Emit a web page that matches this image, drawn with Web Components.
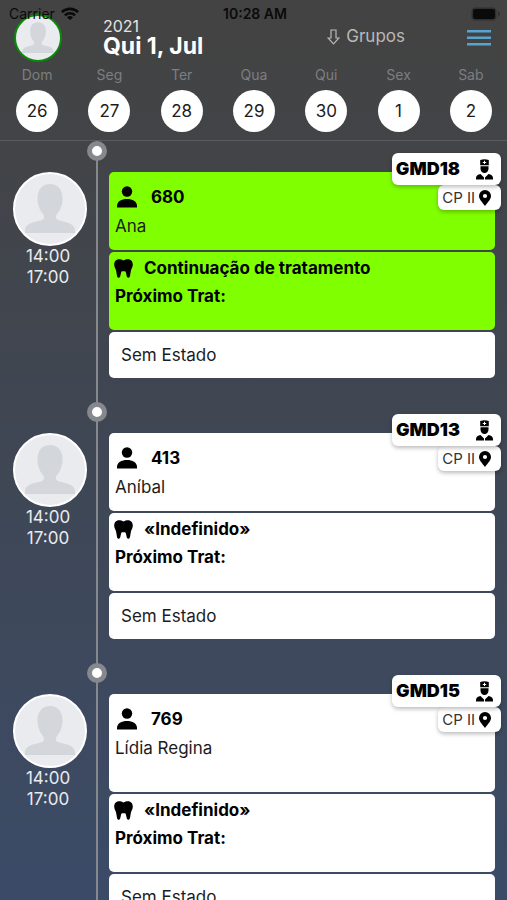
<!DOCTYPE html>
<html lang="pt">
<head>
<meta charset="utf-8">
<meta name="viewport" content="width=device-width, initial-scale=1">
<title>Agenda</title>
<style>
  html, body { margin: 0; height: 100%; }
  body { font-family: Inter, "Liberation Sans", sans-serif; font-size: 17px; line-height: 21px; color: #000; background: #434343; }
</style>
</head>
<body>
<agenda-app></agenda-app>
<script>
const ICONS = {
  person: ['0 0 20 22', '<circle cx="10" cy="5.500" r="5.200"/><path d="M0 21.500v-1.500C0 15.500 4.500 13 10 13s10 2.500 10 7v1.500z"/>'],
  tooth: ['0 0 19 19', '<path d="M9.500 1.500C11 .7 12.300.2 14 .2c3 0 4.800 2.400 4.800 5.300 0 2.500-1.300 4-1.800 5.800-.5 2-.5 3.700-1 5.700-.3 1.100-.8 1.800-1.700 1.800s-1.400-.7-1.600-1.700l-.8-3.600c-.2-.8-.6-1.200-1.100-1.200H8.200c-.5 0-.9.400-1.100 1.200l-.8 3.600c-.2 1-.7 1.700-1.600 1.700S3.300 18.100 3 17c-.5-2-.5-3.700-1-5.700C1.500 9.500.2 8 .2 5.500.2 2.600 2 .2 5 .2c1.700 0 3 .5 4.500 1.300z"/>'],
  nurse: ['0 0 17 21', '<path fill-rule="evenodd" d="M4.200.9Q8.500-.5 12.800.9V6.200H4.200ZM8 1.700v1.200H6.800v1H8v1.200h1V3.900h1.200v-1H9V1.700z"/><path d="M4.500 7.200h8v2.300a4 4.500 0 0 1-8 0z"/><path d="M4.500 15 8 18.500V20.600H0V19C0 16.800 2 15.300 4.500 15zM12.500 15 9 18.500v2.100h8V19c0-2.200-2-3.700-4.500-4z"/>'],
  pin: ['0 0 12 16', '<path fill-rule="evenodd" d="M6 0a6 6 0 0 1 6 6c0 3-3 6-6 10C3 12 0 9 0 6a6 6 0 0 1 6-6zm0 3.900a2.100 2.100 0 1 0 0 4.200 2.100 2.100 0 0 0 0-4.200z"/>'],
  wifi: ['0 0 18 13', '<path d="M0 4.200a13 13 0 0 1 18 0l-1.700 1.900a10.500 10.500 0 0 0-14.600 0zM3 7.400a8.700 8.700 0 0 1 12 0l-1.800 1.900a6 6 0 0 0-8.400 0zM6 10.500a4.300 4.300 0 0 1 6 0L9 13z"/>'],
  battery: ['0 0 30 14', '<rect x=".5" y=".5" width="25" height="13" rx="4" fill="#303030"/><rect x="2" y="2" width="22" height="10" rx="2.500"/><path d="M27 4.500q2 .8 2 2.500t-2 2.500z" fill="#303030"/>'],
  down: ['0 0 13 16', '<path d="M4 1h5v8h3l-5.500 5.800L1 9h3z" fill="none" stroke="currentColor" stroke-width="1.200"/>'],
  menu: ['0 0 24 16', '<path d="M0 0h24v2.500H0zM0 6.500h24V9H0zM0 13h24v2.500H0z"/>']
};

customElements.define('app-icon', class extends HTMLElement {
  connectedCallback() {
    const [box, shapes] = ICONS[this.getAttribute('name')];
    this.attachShadow({ mode: 'open' }).innerHTML = `
      <style>:host{display:block;flex:none} svg{display:block;width:100%;height:100%}</style>
      <svg viewBox="${box}" fill="currentColor" aria-hidden="true">${shapes}</svg>`;
  }
});

customElements.define('user-avatar', class extends HTMLElement {
  connectedCallback() {
    this.attachShadow({ mode: 'open' }).innerHTML = `
      <style>
        :host{display:block;box-sizing:border-box;border-radius:50%;overflow:hidden;border:2px solid #fff;background:#e9ebef}
        svg{display:block;width:100%;height:100%}
      </style>
      <svg viewBox="0 0 70 70" role="img" aria-label="Foto">
        <path fill="#d3d6db" d="M35 10c8 0 12.500 5.500 12.500 14.500 0 7-2.500 12-5.500 15.500-1.500 2-1.500 5 1 6 7 2.500 17 2.500 17 11v2H10v-2c0-8.500 10-8.500 17-11 2.500-1 2.500-4 1-6-3-3.500-5.500-8.500-5.500-15.500C22.500 15.500 27 10 35 10z"/>
      </svg>`;
  }
});

customElements.define('status-bar', class extends HTMLElement {
  connectedCallback() {
    this.attachShadow({ mode: 'open' }).innerHTML = `
      <style>
        :host{display:grid;grid-template-columns:1fr auto 1fr;align-items:center;height:27px;padding:0 6px 0 9px;box-sizing:border-box;font-size:14px;color:#0a0a0a}
        .net{display:flex;gap:6px;align-items:center}
        .net app-icon{width:18px;height:13px}
        .bat{width:30px;height:14px;justify-self:end}
        time{font-weight:600}
      </style>
      <div class="net"><span>Carrier</span><app-icon name="wifi"></app-icon></div>
      <time>10:28 AM</time>
      <app-icon class="bat" name="battery"></app-icon>`;
  }
});

customElements.define('week-day', class extends HTMLElement {
  connectedCallback() {
    this.attachShadow({ mode: 'open' }).innerHTML = `
      <style>
        :host{display:flex;flex-direction:column;align-items:center;gap:5px}
        label{font-size:14px;line-height:20px;color:#7d7e80}
        button{width:42px;height:42px;padding:0;border:0;border-radius:50%;background:#fff;color:#1c1c1c;font:inherit}
      </style>
      <label for="d">${this.getAttribute('name')}</label>
      <button id="d"><slot></slot></button>`;
  }
});

customElements.define('agenda-header', class extends HTMLElement {
  connectedCallback() {
    this.attachShadow({ mode: 'open' }).innerHTML = `
      <style>
        :host{display:block;position:relative;padding:14px 0 8px}
        status-bar{position:absolute;top:0;left:0;right:0}
        .bar{display:flex;align-items:flex-start;padding:0 16px 0 14px}
        user-avatar{width:48px;height:48px;border-color:#098a09;margin-right:41px}
        .date{flex:1;color:#fff;padding-top:3px}
        .date span{display:block;font-size:16px;line-height:18px;color:#e4e4e4}
        h1{margin:0;font-size:23px;line-height:22px;font-weight:700}
        button{border:0;padding:0;background:none;font:inherit;color:#b9b9b9}
        .groups{display:flex;align-items:center;gap:6px;margin:12px 62px 0 0}
        .groups app-icon{width:13px;height:16px}
        .menu{color:#57a5cf;margin-top:16px}
        .menu app-icon{width:24px;height:16px}
        nav{display:grid;grid-template-columns:repeat(7,1fr);margin-top:3px;padding-left:1px}
      </style>
      <div class="bar">
        <user-avatar></user-avatar>
        <div class="date"><span>2021</span><h1>Qui 1, Jul</h1></div>
        <button class="groups"><app-icon name="down"></app-icon>Grupos</button>
        <button class="menu" aria-label="Menu"><app-icon name="menu"></app-icon></button>
      </div>
      <nav aria-label="Semana">
        <week-day name="Dom">26</week-day><week-day name="Seg">27</week-day><week-day name="Ter">28</week-day>
        <week-day name="Qua">29</week-day><week-day name="Qui">30</week-day><week-day name="Sex">1</week-day><week-day name="Sab">2</week-day>
      </nav>
      <status-bar></status-bar>`;
  }
});

customElements.define('agenda-visit', class extends HTMLElement {
  connectedCallback() {
    const a = n => this.getAttribute(n);
    this.attachShadow({ mode: 'open' }).innerHTML = `
      <style>
        :host{display:grid;grid-template-columns:100px minmax(0,1fr);column-gap:9px;position:relative;padding:31px 12px 24px 0;color:#000;--card:#fff}
        :host([active]){--card:#80ff00}
        .rail{position:absolute;left:96px;top:0;bottom:0;width:2px;background:#85888c}
        .dot{position:absolute;left:87px;top:0;width:20px;height:20px;box-sizing:border-box;border:5px solid #85888c;border-radius:50%;background:#fff}
        .who{display:flex;flex-direction:column;align-items:center;color:#e9ebef}
        .who time{margin-right:4px}
        user-avatar{width:74px;height:74px}
        .cards{display:grid;gap:2px;align-content:start}
        section{background:var(--card);border-radius:5px;box-sizing:border-box;padding:6px}
        .row{display:flex;align-items:center;font-weight:700}
        .patient{min-height:78px;padding-top:14px}
        .patient .row{gap:14px;padding-left:2px}
        .patient app-icon{width:20px;height:22px}
        .patient p{margin:8px 0 0;color:#1c1c1c}
        :host([tall]) .patient{min-height:98px}
        .treat{min-height:78px}
        .treat .row{gap:11px}
        .treat app-icon{width:19px;height:19px;margin-left:-1px}
        .treat p{margin:7px 0 0;font-weight:700}
        .state{border:0;border-radius:5px;background:#fff;height:46px;padding:0 12px;text-align:left;font:inherit;color:#1c1c1c}
        .tags{position:absolute;right:6px;top:12px;display:flex;flex-direction:column;align-items:flex-end}
        .tag{display:flex;align-items:center;background:#fff;border-radius:6px;box-sizing:border-box;box-shadow:0 2px 4px #0004}
        .doc{position:relative;gap:16px;height:32px;padding:0 8px 2px 4px;font-size:18px;font-weight:900}
        .doc app-icon{width:17px;height:21px;margin-top:2px}
        .room{gap:4px;height:25px;padding:0 10px 0 4px;font-size:15px;color:#333}
        .room app-icon{width:12px;height:16px;color:#000}
      </style>
      <span class="rail"></span><span class="dot"></span>
      <div class="who"><user-avatar></user-avatar><time>14:00</time><time>17:00</time></div>
      <div class="cards">
        <section class="patient"><div class="row"><app-icon name="person"></app-icon><span>${a('number')}</span></div><p><slot></slot></p></section>
        <section class="treat"><div class="row"><app-icon name="tooth"></app-icon><span>${a('treatment')}</span></div><p>Próximo Trat:</p></section>
        <button class="state">Sem Estado</button>
      </div>
      <div class="tags">
        <div class="tag doc"><span>${a('office')}</span><app-icon name="nurse"></app-icon></div>
        <div class="tag room"><span>CP II</span><app-icon name="pin"></app-icon></div>
      </div>`;
  }
});

customElements.define('agenda-app', class extends HTMLElement {
  connectedCallback() {
    this.attachShadow({ mode: 'open' }).innerHTML = `
      <style>
        :host{display:flex;flex-direction:column;height:100vh;background:linear-gradient(#434343 5%,#3b4b67)}
        main{flex:1;min-height:0;overflow-y:auto;scrollbar-width:none;border-top:1px solid #5b5c5f}
      </style>
      <agenda-header></agenda-header>
      <main>
        <agenda-visit active number="680" treatment="Continuação de tratamento" office="GMD18">Ana</agenda-visit>
        <agenda-visit number="413" treatment="«Indefinido»" office="GMD13">Aníbal</agenda-visit>
        <agenda-visit tall number="769" treatment="«Indefinido»" office="GMD15">Lídia Regina</agenda-visit>
      </main>`;
  }
});
</script>
</body>
</html>
